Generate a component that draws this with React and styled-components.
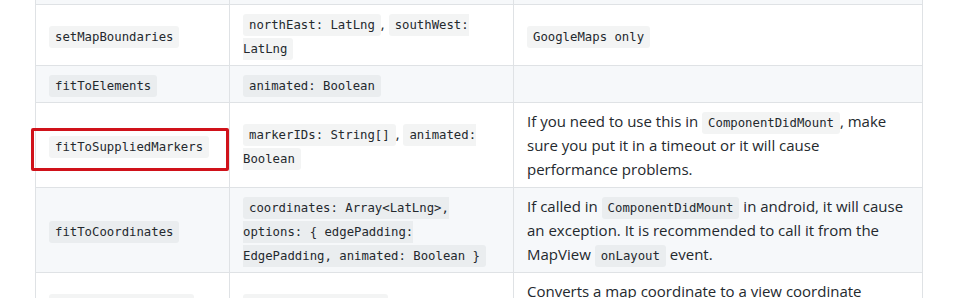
import React from 'react';
import styled, { createGlobalStyle } from 'styled-components';

const GlobalStyle = createGlobalStyle`
  html, body {
    margin: 0;
    padding: 0;
    background: #ffffff;
    overflow: hidden;
  }
  body {
    font-family: "Open Sans", "Noto Sans", sans-serif;
    color: #24292e;
  }
`;

const Page = styled.div`
  padding-left: 35px;
  margin-top: -33px;
`;

const StyledTable = styled.table`
  border-collapse: collapse;
  border-spacing: 0;
  table-layout: fixed;
  width: 887px;
  font-size: 15px;
  line-height: 24px;
`;

const StyledRow = styled.tr`
  background-color: ${(props) => (props.$striped ? '#f6f8fa' : '#ffffff')};
`;

const StyledCell = styled.td`
  position: relative;
  border: 1px solid #dfe2e5;
  padding: 6px 13px;
  vertical-align: middle;
`;

const StyledCode = styled.code`
  font-family: "DejaVu Sans Mono", "Liberation Mono", monospace;
  font-size: 12.3px;
  line-height: 1;
  padding: 4px 6px;
  margin: 0;
  border-radius: 3px;
  background-color: rgba(27, 31, 35, 0.05);
`;

const StyledHighlight = styled.div`
  position: absolute;
  left: -5px;
  top: 25px;
  width: 198px;
  height: 43px;
  box-sizing: border-box;
  border: 3px solid #d0121a;
  border-radius: 2px;
  pointer-events: none;
`;

const rows = [
  {
    name: 'getMapBoundaries',
    args: null,
    notes: <StyledCode>{'Promise<{northEast: LatLng, southWest: LatLng}>'}</StyledCode>,
  },
  {
    name: 'setMapBoundaries',
    args: (
      <>
        <StyledCode>northEast: LatLng</StyledCode>, <StyledCode>southWest: LatLng</StyledCode>
      </>
    ),
    notes: <StyledCode>GoogleMaps only</StyledCode>,
  },
  {
    name: 'fitToElements',
    args: <StyledCode>animated: Boolean</StyledCode>,
    notes: null,
  },
  {
    name: 'fitToSuppliedMarkers',
    highlight: true,
    args: (
      <>
        <StyledCode>markerIDs: String[]</StyledCode>, <StyledCode>animated: Boolean</StyledCode>
      </>
    ),
    notes: (
      <>
        If you need to use this in <StyledCode>ComponentDidMount</StyledCode>, make sure you put it
        in a timeout or it will cause performance problems.
      </>
    ),
  },
  {
    name: 'fitToCoordinates',
    args: (
      <StyledCode>
        {'coordinates: Array<LatLng>, options: { edgePadding: EdgePadding, animated: Boolean }'}
      </StyledCode>
    ),
    notes: (
      <>
        If called in <StyledCode>ComponentDidMount</StyledCode> in android, it will cause an
        exception. It is recommended to call it from the MapView <StyledCode>onLayout</StyledCode>{' '}
        event.
      </>
    ),
  },
  {
    name: 'pointForCoordinate',
    args: <StyledCode>coordinate: LatLng</StyledCode>,
    notes: (
      <>
        Converts a map coordinate to a view coordinate (<StyledCode>Point</StyledCode>). Returns{' '}
        <StyledCode>{'Promise<Point>'}</StyledCode>.
      </>
    ),
  },
];

function App() {
  return (
    <Page>
      <GlobalStyle />
      <StyledTable>
        <colgroup>
          <col style={{ width: 194 }} />
          <col style={{ width: 284 }} />
          <col style={{ width: 409 }} />
        </colgroup>
        <tbody>
          {rows.map((row, i) => (
            <StyledRow key={row.name} $striped={i % 2 === 0}>
              <StyledCell>
                <StyledCode>{row.name}</StyledCode>
                {row.highlight && <StyledHighlight />}
              </StyledCell>
              <StyledCell>{row.args}</StyledCell>
              <StyledCell>{row.notes}</StyledCell>
            </StyledRow>
          ))}
        </tbody>
      </StyledTable>
    </Page>
  );
}

export default App;
